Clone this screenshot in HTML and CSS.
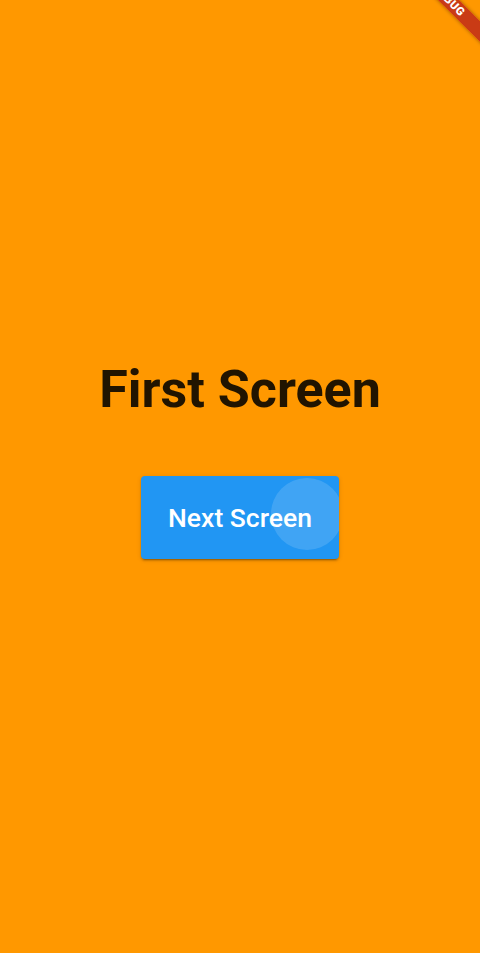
FILE: index.html
```html
<!DOCTYPE html>
<html>
<head>
<meta charset="utf-8">
<link rel="stylesheet" href="styles.css">
</head>
<body>
<div class="screen">
  <h1 class="title">First Screen</h1>
  <button class="btn"><span class="ripple"></span><span class="label">Next Screen</span></button>
  <div class="banner">DEBUG</div>
</div>
</body>
</html>
```
FILE: styles.css
```css
html, body {
  margin: 0;
  padding: 0;
}
body {
  background: #ff9800;
  font-family: Roboto, "Liberation Sans", sans-serif;
}
.screen {
  position: relative;
  width: 480px;
  height: 953px;
  overflow: hidden;
  background: #ff9800;
  display: flex;
  flex-direction: column;
  align-items: center;
  padding-top: 359px;
  box-sizing: border-box;
}
.title {
  margin: 0;
  font-size: 52px;
  line-height: 61px;
  font-weight: 700;
  color: rgba(0, 0, 0, 0.87);
}
.btn {
  position: relative;
  overflow: hidden;
  margin-top: 56px;
  width: 198px;
  height: 83px;
  border: none;
  border-radius: 4px;
  background: #2196f3;
  color: #fff;
  font-family: Roboto, "Liberation Sans", sans-serif;
  font-size: 26.5px;
  font-weight: 500;
  display: flex;
  align-items: center;
  justify-content: center;
  padding: 0;
  box-shadow: 0 3px 1px -2px rgba(0,0,0,0.2), 0 2px 2px 0 rgba(0,0,0,0.14), 0 1px 5px 0 rgba(0,0,0,0.12);
}
.label {
  position: relative;
}
.ripple {
  position: absolute;
  left: 130px;
  top: 2px;
  width: 72px;
  height: 72px;
  border-radius: 50%;
  background: rgba(255, 255, 255, 0.14);
}
.banner {
  position: absolute;
  left: 349px;
  top: -7px;
  width: 200px;
  height: 15px;
  line-height: 15px;
  transform: rotate(45deg);
  background: rgba(183, 28, 28, 0.75);
  color: #fff;
  font-size: 11.5px;
  font-weight: 900;
  text-align: center;
  letter-spacing: 0.5px;
  box-shadow: 0 0 4px rgba(0,0,0,0.4);
}
```
